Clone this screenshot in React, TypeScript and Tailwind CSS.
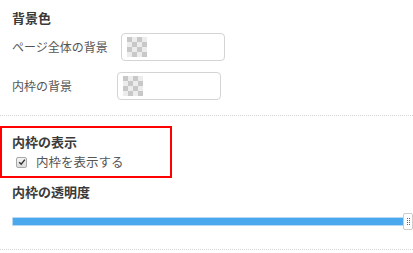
import React from "react";

const font = { fontFamily: '"Noto Sans CJK JP", "Noto Sans", sans-serif' };

function Checker() {
  const cells = Array.from({ length: 16 }, (_, i) => {
    const r = Math.floor(i / 4);
    const c = i % 4;
    return (r + c) % 2 === 0;
  });
  return (
    <div className="grid grid-cols-4 w-[20px] h-[20px]">
      {cells.map((dark, i) => (
        <div key={i} className={dark ? "bg-[#c8c8c8]" : "bg-[#ececec]"} />
      ))}
    </div>
  );
}

function ColorField({ className }: { className?: string }) {
  return (
    <div className={"flex items-center h-[28px] w-[104px] rounded-[4px] border border-[#d4d4d4] bg-white px-[5px] " + (className ?? "")}>
      <Checker />
    </div>
  );
}

export default function App() {
  return (
    <div className="w-[413px] h-[253px] bg-white text-[#333] overflow-hidden" style={font}>
      <div className="px-[12px] pt-[9px]">
        <h3 className="text-[13px] font-bold leading-[18px] text-[#3a3a3a]">背景色</h3>
        <div className="flex items-center mt-[6px]">
          <span className="text-[12px] text-[#555] w-[109px]">ページ全体の背景</span>
          <ColorField />
        </div>
        <div className="flex items-center mt-[11px]">
          <span className="text-[12px] text-[#555] w-[105px]">内枠の背景</span>
          <ColorField />
        </div>
      </div>
      <div className="mt-[15px] border-t border-dotted border-[#d8d8d8]" />

      <div className="mt-[10px] w-[172px] h-[52px] border-2 border-[#ff0000] pl-[10px] pt-[5px]">
        <h3 className="text-[13px] font-bold leading-[18px] text-[#3a3a3a]">内枠の表示</h3>
        <label className="flex items-center ml-[4px] mt-[3px]">
          <span className="flex items-center justify-center w-[11px] h-[11px] rounded-[2px] border border-[#a8a8a8] bg-gradient-to-b from-[#f4f4f4] to-[#dcdcdc]">
            <svg viewBox="0 0 10 10" className="w-[8px] h-[8px]">
              <path d="M1.5 5.2 L4 7.8 L8.6 2" fill="none" stroke="#333" strokeWidth="1.8" />
            </svg>
          </span>
          <span className="ml-[9px] text-[12.5px] text-[#555] leading-[16px]">内枠を表示する</span>
        </label>
      </div>

      <div className="px-[12px] pt-[5px]">
        <h3 className="text-[13px] font-bold leading-[18px] text-[#3a3a3a]">内枠の透明度</h3>
      </div>
      <div className="relative mt-[12px] ml-[12px] h-[17px] w-[401px] flex items-center">
        <div className="h-[9px] w-[394px] bg-[#4aa9ee] border border-[#b9d9f3] rounded-[1px]" />
        <div className="absolute right-0 top-0 h-[17px] w-[10px] rounded-[2px] border border-[#ccc] bg-white flex items-center justify-center">
          <div className="grid grid-cols-2 gap-[1px]">
            {Array.from({ length: 8 }, (_, i) => (
              <div key={i} className="w-[1px] h-[1px] bg-[#666]" />
            ))}
          </div>
        </div>
      </div>
      <div className="mt-[19px] border-t border-dotted border-[#d8d8d8]" />
    </div>
  );
}
